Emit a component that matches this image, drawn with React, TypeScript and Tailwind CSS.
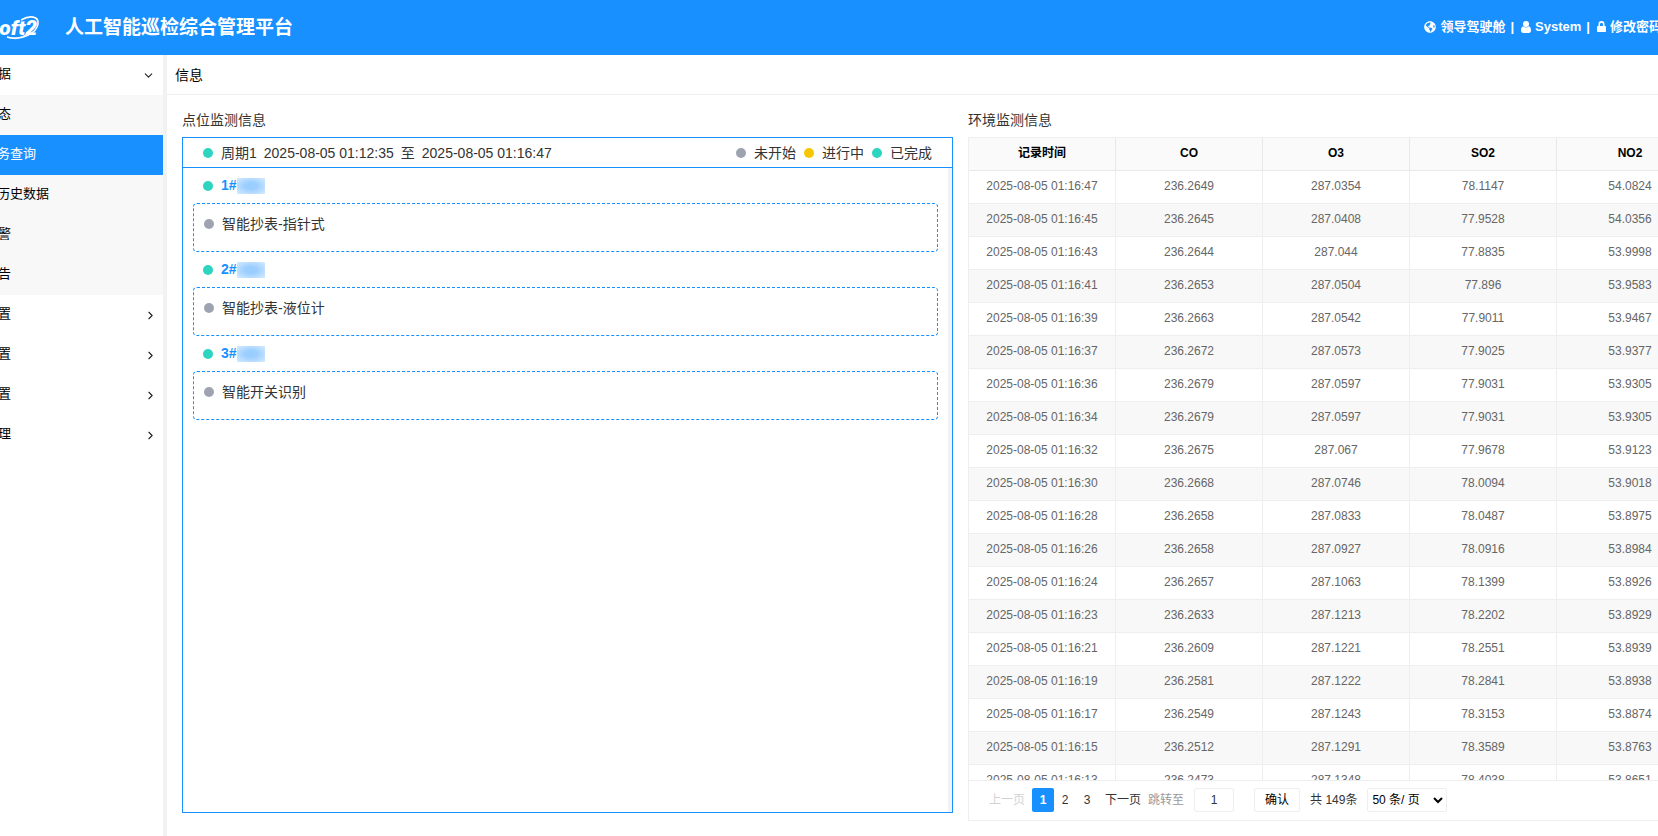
import clsx from 'clsx'
import { ChevronDown, ChevronRight } from 'lucide-react'
import { FaGlobeAmericas } from 'react-icons/fa'

type Status = 'idle' | 'running' | 'done'

const subMenu = ['设备状态', '任务查询', '环境历史数据', '实时报警', '巡检报告']
const mainMenu = ['任务配置', '设备配置', '系统配置', '用户管理']

const points = [
  { id: '1#', task: '智能抄表-指针式' },
  { id: '2#', task: '智能抄表-液位计' },
  { id: '3#', task: '智能开关识别' },
]

const columns = ['记录时间', 'CO', 'O3', 'SO2', 'NO2']

const records = [
  ['01:16:47', '236.2649', '287.0354', '78.1147', '54.0824'],
  ['01:16:45', '236.2645', '287.0408', '77.9528', '54.0356'],
  ['01:16:43', '236.2644', '287.044', '77.8835', '53.9998'],
  ['01:16:41', '236.2653', '287.0504', '77.896', '53.9583'],
  ['01:16:39', '236.2663', '287.0542', '77.9011', '53.9467'],
  ['01:16:37', '236.2672', '287.0573', '77.9025', '53.9377'],
  ['01:16:36', '236.2679', '287.0597', '77.9031', '53.9305'],
  ['01:16:34', '236.2679', '287.0597', '77.9031', '53.9305'],
  ['01:16:32', '236.2675', '287.067', '77.9678', '53.9123'],
  ['01:16:30', '236.2668', '287.0746', '78.0094', '53.9018'],
  ['01:16:28', '236.2658', '287.0833', '78.0487', '53.8975'],
  ['01:16:26', '236.2658', '287.0927', '78.0916', '53.8984'],
  ['01:16:24', '236.2657', '287.1063', '78.1399', '53.8926'],
  ['01:16:23', '236.2633', '287.1213', '78.2202', '53.8929'],
  ['01:16:21', '236.2609', '287.1221', '78.2551', '53.8939'],
  ['01:16:19', '236.2581', '287.1222', '78.2841', '53.8938'],
  ['01:16:17', '236.2549', '287.1243', '78.3153', '53.8874'],
  ['01:16:15', '236.2512', '287.1291', '78.3589', '53.8763'],
  ['01:16:13', '236.2473', '287.1348', '78.4038', '53.8651'],
]

const Dot = ({ status }: { status: Status }) => (
  <span
    className={clsx(
      'size-[10px] shrink-0 rounded-full',
      status === 'idle' && 'bg-[#9ea3b1]',
      status === 'running' && 'bg-[#f7c600]',
      status === 'done' && 'bg-[#2dd4bf]',
    )}
  />
)

const Legend = ({ status, label }: { status: Status; label: string }) => (
  <span className="flex items-center gap-2">
    <Dot status={status} />
    {label}
  </span>
)

const Logo = () => (
  <div className="relative h-8 w-10 shrink-0">
    <span className="absolute top-0 right-[3px] font-['Roboto','Liberation_Sans',sans-serif] text-[21px] leading-8 font-black italic">
      Soft2
    </span>
    <svg className="absolute top-0 right-0 h-8 w-9" viewBox="0 0 36 32" fill="none" stroke="currentColor">
      <path d="M17 8C26 3 35 4 34 12C33 20 18 30 3 25" strokeWidth="1.6" />
      <path d="M3 25C11 28 20 25 26 20" strokeWidth="1" />
    </svg>
  </div>
)

const UserIcon = () => (
  <svg className="h-3 w-[10px]" viewBox="0 0 10 12" fill="currentColor">
    <circle cx="5" cy="3" r="3" />
    <path d="M2.3 5.2C.8 5.5 0 7 0 9.6C0 11.2 .9 12 2.2 12H7.8C9.1 12 10 11.2 10 9.6C10 7 9.2 5.5 7.7 5.2C6.2 6.9 3.8 6.9 2.3 5.2Z" />
  </svg>
)

const LockIcon = () => (
  <svg className="h-[11px] w-[9px]" viewBox="0 0 9 11" fill="currentColor">
    <path d="M1.5 5V3.3A3 3.2 0 0 1 7.5 3.3V5H8.2C8.7 5 9 5.3 9 5.8V10.2C9 10.7 8.7 11 8.2 11H.8C.3 11 0 10.7 0 10.2V5.8C0 5.3 .3 5 .8 5ZM3 5H6V3.3A1.5 1.6 0 0 0 3 3.3Z" />
  </svg>
)

const Header = () => (
  <header className="flex h-[55px] shrink-0 items-center justify-between overflow-hidden bg-[#1890ff] text-white">
    <div className="flex items-center gap-[25px]">
      <Logo />
      <h1 className="pt-px text-[19px] font-bold">人工智能巡检综合管理平台</h1>
    </div>
    <nav className="-mr-1 flex shrink-0 items-center pb-[2px] text-[13px] font-bold">
      <a href="#cockpit" className="flex items-center gap-1">
        <FaGlobeAmericas className="size-3" />
        领导驾驶舱
      </a>
      <span className="mx-[5px]">|</span>
      <a href="#user" className="ml-[2px] flex items-center gap-1">
        <UserIcon />
        System
      </a>
      <span className="mx-[5px]">|</span>
      <a href="#password" className="ml-[2px] flex items-center gap-1">
        <LockIcon />
        修改密码
      </a>
    </nav>
  </header>
)

// labels are right-aligned against a fixed edge, the start of each one runs out of the window
const MenuLabel = ({ text, className }: { text: string; className: string }) => (
  <span className={clsx('flex shrink-0 justify-end pb-[2px] whitespace-nowrap', className)}>{text}</span>
)

const Sidebar = () => (
  <aside className="w-[167px] shrink-0 overflow-hidden border-r-4 border-[#f2f2f2] text-[13px] text-black">
    <button className="flex h-10 w-full items-center justify-between pr-2">
      <MenuLabel text="监测数据" className="w-[11px]" />
      <ChevronDown className="size-[13px] text-[#222]" />
    </button>
    <ul className="bg-[#f8f8f8]">
      {subMenu.map((item, i) => (
        <li key={item}>
          <a href="#menu" className={clsx('flex h-10 items-center', i === 1 && 'bg-[#1890ff] text-white')}>
            <MenuLabel text={item} className={i === 1 ? 'w-9' : i === 2 ? 'w-[49px]' : 'w-[11px]'} />
          </a>
        </li>
      ))}
    </ul>
    {mainMenu.map((item) => (
      <button key={item} className="flex h-10 w-full items-center justify-between pr-[6px]">
        <MenuLabel text={item} className="w-[11px]" />
        <ChevronRight className="size-[13px] text-[#222]" />
      </button>
    ))}
  </aside>
)

const PointPanel = () => (
  <section className="flex min-w-0 flex-col">
    <h2 className="mb-[7px] leading-5">点位监测信息</h2>
    <div className="flex flex-1 flex-col border border-[#1890ff]">
      <div className="flex h-[30px] items-center justify-between border-b border-[#1890ff] px-5 pt-px">
        <div className="flex items-center gap-2">
          <Dot status="done" />
          <span className="flex gap-[7px]">
            <span>周期1</span>
            <span>2025-08-05 01:12:35</span>
            <span>至</span>
            <span>2025-08-05 01:16:47</span>
          </span>
        </div>
        <div className="flex gap-2">
          <Legend status="idle" label="未开始" />
          <Legend status="running" label="进行中" />
          <Legend status="done" label="已完成" />
        </div>
      </div>
      <div className="flex-1 border-r-4 border-[#f2f2f2] pr-[10px] pl-[10px]">
        {points.map((point) => (
          <div key={point.id}>
            <div className="flex h-[35px] items-center gap-2 pl-[10px]">
              <Dot status="done" />
              <span className="flex items-center font-bold text-[#1890ff]">
                {point.id}
                <span className="h-4 w-7 bg-radial from-[#9bceff] from-30% to-[#d6ebff]" />
              </span>
            </div>
            <div className="flex h-[49px] items-start rounded-[4px] border border-dashed border-[#1890ff] px-[10px] pt-[10px]">
              <span className="flex items-center gap-2 leading-5">
                <Dot status="idle" />
                {point.task}
              </span>
            </div>
          </div>
        ))}
      </div>
    </div>
  </section>
)

const Pager = () => (
  <div className="flex h-[41px] items-center border-y border-l border-[#eee] pb-px pl-5 text-[12px] whitespace-nowrap">
    <button className="text-[#d2d2d2]" disabled>
      上一页
    </button>
    <button className="ml-[7px] h-6 w-[22px] rounded-[2px] bg-[#1890ff] font-bold text-white">1</button>
    <button className="w-[22px]">2</button>
    <button className="w-[22px]">3</button>
    <button className="ml-[7px]">下一页</button>
    <label htmlFor="page" className="ml-[7px] text-[#999]">
      跳转至
    </label>
    <input
      id="page"
      defaultValue="1"
      className="ml-[10px] h-6 w-10 rounded-[2px] border border-[#eee] text-center"
    />
    <button className="ml-5 h-6 w-[46px] rounded-[2px] border border-[#eee] text-black">确认</button>
    <span className="ml-[10px]">共 149条</span>
    <select
      aria-label="每页条数"
      className="ml-[10px] h-6 w-20 rounded-[2px] border border-[#eee] bg-white text-black"
    >
      <option>50 条/ 页</option>
    </select>
  </div>
)

const RecordPanel = () => (
  <section className="flex min-w-0 flex-col">
    <h2 className="mb-[7px] leading-5">环境监测信息</h2>
    <div className="min-h-0 flex-1 overflow-hidden border-t border-l border-[#eee]">
      <table className="w-[735px] table-fixed border-separate border-spacing-0 text-center text-[12px]">
        <thead>
          <tr className="h-[33px] bg-[#fafafa] text-black">
            {columns.map((column) => (
              <th key={column} className="border-r border-b border-[#e8e8e8] p-0 pb-[2px] font-bold">
                {column}
              </th>
            ))}
          </tr>
        </thead>
        <tbody>
          {records.map(([time, ...values]) => (
            <tr key={time} className="h-[33px] text-[#666] even:bg-[#f8f8f8]">
              <td className="border-r border-b border-[#eee] p-0 pb-[2px]">2025-08-05 {time}</td>
              {values.map((value, i) => (
                <td key={i} className="border-r border-b border-[#eee] p-0 pb-[2px]">
                  {value}
                </td>
              ))}
            </tr>
          ))}
        </tbody>
      </table>
    </div>
    <Pager />
  </section>
)

export default function App() {
  return (
    <div className="flex h-screen flex-col overflow-hidden bg-white font-['Liberation_Sans','Noto_Sans_CJK_SC',sans-serif] text-[14px] text-[#333]">
      <Header />
      <div className="flex min-h-0 flex-1">
        <Sidebar />
        <main className="flex min-w-0 flex-1 flex-col">
          <div className="flex h-10 shrink-0 items-center border-b border-[#eee] pt-px pl-2 text-black">信息</div>
          <div className="grid min-h-0 flex-1 grid-cols-[771fr_690fr] grid-rows-[minmax(0,1fr)] gap-[15px] pt-[15px] pl-[15px]">
            <div className="flex flex-col pb-[23px] [&>section]:flex-1">
              <PointPanel />
            </div>
            <div className="flex min-h-0 min-w-0 flex-col pb-[15px] [&>section]:min-h-0 [&>section]:flex-1">
              <RecordPanel />
            </div>
          </div>
        </main>
      </div>
    </div>
  )
}
